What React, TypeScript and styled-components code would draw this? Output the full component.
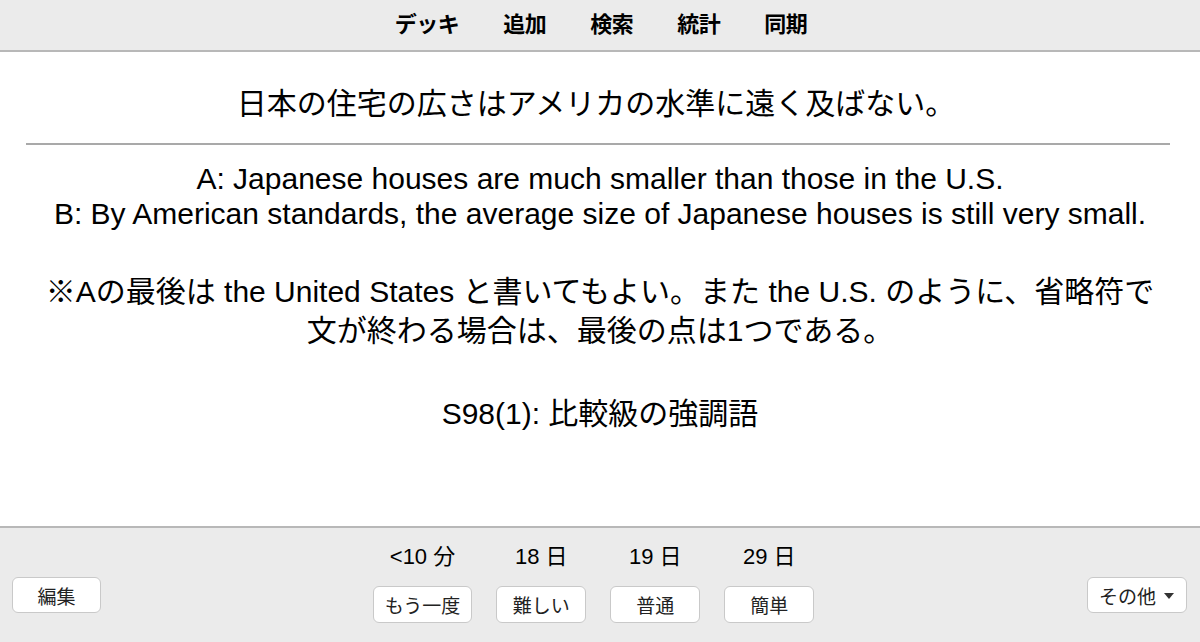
import React from 'react'
import styled, { createGlobalStyle } from 'styled-components'

const GlobalStyle = createGlobalStyle`
  html, body {
    margin: 0;
    padding: 0;
    height: 100%;
    background: #ffffff;
  }
  body {
    font-family: "Liberation Sans", "Noto Sans CJK JP", sans-serif;
    color: #000;
  }
  #root {
    height: 100%;
  }
`

const navItems = ['デッキ', '追加', '検索', '統計', '同期']

const answers = [
  { due: '<10 分', label: 'もう一度' },
  { due: '18 日', label: '難しい' },
  { due: '19 日', label: '普通' },
  { due: '29 日', label: '簡単' },
]

const App = () => {
  return (
    <Page>
      <GlobalStyle />
      <TopBar>
        {navItems.map((item) => (
          <NavLink key={item}>{item}</NavLink>
        ))}
      </TopBar>

      <Card>
        <Question>日本の住宅の広さはアメリカの水準に遠く及ばない。</Question>
        <Divider />
        <Answer>
          A: Japanese houses are much smaller than those in the U.S.
          <br />
          B: By American standards, the average size of Japanese houses is still very small.
        </Answer>
        <Note>
          ※Aの最後は the United States と書いてもよい。また the U.S. のように、省略符で
          <br />
          文が終わる場合は、最後の点は1つである。
        </Note>
        <Tag>S98(1): 比較級の強調語</Tag>
      </Card>

      <BottomBar>
        <Side $align="start">
          <Button $wide={89}>編集</Button>
        </Side>
        <AnswerRow>
          {answers.map((a) => (
            <AnswerColumn key={a.label}>
              <Due>{a.due}</Due>
              <Button>{a.label}</Button>
            </AnswerColumn>
          ))}
        </AnswerRow>
        <Side $align="end">
          <MoreButton>
            その他
            <Caret />
          </MoreButton>
        </Side>
      </BottomBar>
    </Page>
  )
}

const Page = styled.div`
  height: 100vh;
  display: flex;
  flex-direction: column;
  overflow: hidden;
`

const TopBar = styled.nav`
  flex: 0 0 50px;
  display: flex;
  justify-content: center;
  align-items: center;
  gap: 44px;
  background: #ebebeb;
  border-bottom: 2px solid #b8b8b8;
  padding-left: 2px;
`

const NavLink = styled.span`
  font-size: 22px;
  font-weight: 700;
  line-height: 26px;
  color: #000;
  letter-spacing: -0.5px;
`

const Card = styled.main`
  flex: 1;
  display: flex;
  flex-direction: column;
  align-items: stretch;
  text-align: center;
  background: #fff;
  font-size: 30px;
`

const Question = styled.div`
  padding-top: 34px;
  line-height: 36px;
  white-space: nowrap;
  padding-right: 8px;
`

const Divider = styled.hr`
  margin: 21px 30px 0 26px;
  border: none;
  height: 2px;
  background: #a9a9a9;
`

const Answer = styled.div`
  margin-top: 16px;
  line-height: 35px;
  white-space: nowrap;
`

const Note = styled.div`
  margin-top: 41px;
  line-height: 39px;
  white-space: nowrap;
`

const Tag = styled.div`
  margin-top: 44px;
  line-height: 39px;
  white-space: nowrap;
`

const BottomBar = styled.footer`
  flex: 0 0 114px;
  display: grid;
  grid-template-columns: 1fr auto 1fr;
  background: #ebebeb;
  border-top: 2px solid #b8b8b8;
  padding: 0 13px 0 12px;
`

const Side = styled.div<{ $align: 'start' | 'end' }>`
  display: flex;
  justify-content: ${(p) => (p.$align === 'start' ? 'flex-start' : 'flex-end')};
  align-items: flex-start;
  padding-top: 49px;
`

const AnswerRow = styled.div`
  display: flex;
  gap: 24px;
  padding-top: 16px;
  margin-right: 12px;
`

const AnswerColumn = styled.div`
  display: flex;
  flex-direction: column;
  align-items: center;
  gap: 16px;
`

const Due = styled.span`
  font-size: 22px;
  line-height: 26px;
  color: #000;
`

const Button = styled.button<{ $wide?: number }>`
  min-width: ${(p) => p.$wide ?? 90}px;
  height: ${(p) => (p.$wide ? 36 : 37)}px;
  padding: 0 11px;
  background: #fff;
  border: 1px solid #c9c9c9;
  border-radius: 6px;
  font-family: "Liberation Sans", "Noto Sans CJK JP", sans-serif;
  font-size: 19px;
  color: #222;
  display: flex;
  align-items: center;
  justify-content: center;
`

const MoreButton = styled(Button)`
  width: 100px;
  height: 36px;
  gap: 8px;
  padding: 0 12px 0 11px;
`

const Caret = styled.span`
  width: 0;
  height: 0;
  border-left: 5px solid transparent;
  border-right: 5px solid transparent;
  border-top: 6px solid #333;
  margin-top: 2px;
`

export default App
